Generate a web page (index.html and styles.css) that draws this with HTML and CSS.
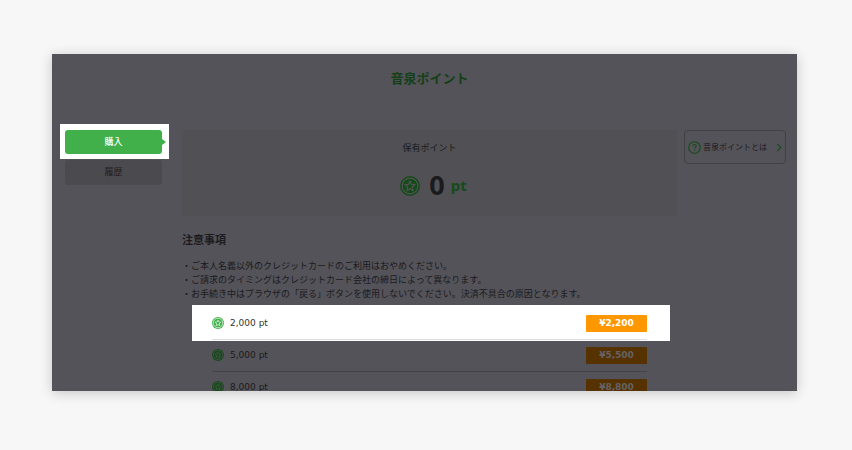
FILE: index.html
```
<!DOCTYPE html>
<html lang="ja">
<head>
<meta charset="utf-8">
<meta name="viewport" content="width=device-width, initial-scale=1">
<title>音泉ポイント</title>
<link rel="stylesheet" href="styles.css">
</head>
<body>
<svg class="defs" aria-hidden="true">
  <symbol id="coin" viewBox="0 0 20 20">
    <circle class="coin-face" cx="10" cy="10" r="10"/>
    <circle class="coin-line" cx="10" cy="10" r="7.9"/>
    <path class="coin-line" d="M10 5.2l1.4 3.1 3.4.4-2.5 2.3.7 3.4-3-1.7-3 1.7.7-3.4-2.5-2.3 3.4-.4z"/>
  </symbol>
</svg>
<div class="panel">
  <h1 class="title">音泉ポイント</h1>
  <div class="layout">
    <nav class="menu">
      <div class="spot"><a class="tab tab-active" href="#buy">購入</a></div>
      <a class="tab" href="#history">履歴</a>
    </nav>
    <main class="content">
      <section class="balance">
        <p class="balance-label">保有ポイント</p>
        <p class="balance-value">
          <svg class="coin coin-large dim" aria-hidden="true"><use href="#coin"/></svg>
          <span class="amount">0</span><span class="unit">pt</span>
        </p>
      </section>
      <h2 class="subtitle">注意事項</h2>
      <ul class="notes">
        <li>・ご本人名義以外のクレジットカードのご利用はおやめください。</li>
        <li>・ご請求のタイミングはクレジットカード会社の締日によって異なります。</li>
        <li>・お手続き中はブラウザの「戻る」ボタンを使用しないでください。決済不具合の原因となります。</li>
      </ul>
      <ul class="plans">
        <li class="plan plan-active">
          <div class="row"><svg class="coin" aria-hidden="true"><use href="#coin"/></svg><span>2,000 pt</span><button class="price" type="button">¥2,200</button></div>
        </li>
        <li class="plan">
          <div class="row"><svg class="coin dim" aria-hidden="true"><use href="#coin"/></svg><span>5,000 pt</span><button class="price" type="button">¥5,500</button></div>
        </li>
        <li class="plan">
          <div class="row"><svg class="coin dim" aria-hidden="true"><use href="#coin"/></svg><span>8,000 pt</span><button class="price" type="button">¥8,800</button></div>
        </li>
      </ul>
    </main>
    <aside>
      <a class="help" href="#about">
        <svg class="help-icon" viewBox="0 0 14 14" aria-hidden="true"><circle cx="7" cy="7" r="6.2"/><path d="M5.1 5.7c0-2.5 3.8-2.4 3.8-.2 0 1.3-1.9 1.4-1.9 2.8M7 9.4v1.3"/></svg>
        <span>音泉ポイントとは</span>
        <svg class="chevron" viewBox="0 0 6 10" aria-hidden="true"><path d="M1 1l4 4-4 4"/></svg>
      </a>
    </aside>
  </div>
</div>
</body>
</html>
```
FILE: styles.css
```
* {
  box-sizing: border-box;
}

body {
  margin: 0;
  height: 100vh;
  padding: 54px 55px 59px 52px;
  display: flex;
  background: #f7f7f7;
  color: #1b1a1d;
  font: 9px/14px "Noto Sans", "Noto Sans CJK JP", sans-serif;
}

h1, h2, p, ul {
  margin: 0;
  padding: 0;
}

ul {
  list-style: none;
}

a {
  color: inherit;
  text-decoration: none;
}

.defs {
  position: absolute;
  width: 0;
  height: 0;
}

.panel {
  flex: 1;
  overflow: hidden;
  background: #545359;
  box-shadow: 0 2px 12px rgba(0, 0, 0, 0.2);
}

.title {
  padding: 14px 0 36px 10px;
  font-size: 13px;
  line-height: 20px;
  text-align: center;
  color: #164018;
}

.layout {
  display: grid;
  grid-template-columns: 109px minmax(0, 1fr) 102px;
  padding: 0 11px 0 8px;
}

.spot {
  height: 35px;
  padding: 6px 7px 5px 5px;
  background: #fff;
}

.tab {
  display: block;
  height: 25px;
  margin: 1px 7px 0 5px;
  border-radius: 3px;
  background: #4b4a4e;
  line-height: 24px;
  text-align: center;
}

.tab-active {
  position: relative;
  height: 24px;
  margin: 0;
  background: #42b04a;
  color: #fff;
  font-weight: 500;
}

.tab-active::after {
  content: "";
  position: absolute;
  left: 100%;
  top: 9px;
  border: 3px solid transparent;
  border-left: 4px solid #42b04a;
  border-right: 0;
}

.content {
  padding: 6px 7px 0 13px;
}

.balance {
  height: 86px;
  padding-top: 11px;
  background: #515054;
  text-align: center;
}

.balance-value {
  display: flex;
  justify-content: center;
  align-items: center;
  padding-left: 8px;
  margin-top: 12px;
  height: 36px;
  font-weight: 700;
}

.amount {
  margin: 0 6px 0 9px;
  font-size: 27px;
  line-height: 36px;
}

.unit {
  font-size: 15px;
  color: #164a1a;
}

.coin {
  width: 12px;
  height: 12px;
  margin-right: 6px;
  fill: #42b04a;
  stroke: #fff;
}

.coin-large {
  width: 20px;
  height: 20px;
  margin: 2px 0 0;
}

.dim {
  fill: #164a1a;
  stroke: #545359;
}

.coin-face {
  stroke: none;
}

.coin-line {
  fill: none;
  stroke-width: 1.1;
}

.subtitle {
  margin-top: 16px;
  font-size: 11px;
  line-height: 16px;
}

.notes {
  margin-top: 11px;
  line-height: 13px;
  white-space: nowrap;
}

.notes li + li {
  margin-top: 1px;
}

.plans {
  margin: 5px 7px 0 10px;
  font-family: "DejaVu Sans", sans-serif;
}

.plan {
  height: 32px;
  padding: 0 23px 0 20px;
}

.plan-active {
  height: 36px;
  margin-bottom: -1px;
  padding-top: 3px;
  background: #fff;
  color: #333;
}

.row {
  display: flex;
  align-items: center;
  height: 32px;
  padding-bottom: 1px;
  border-bottom: 1px solid #434247;
}

.plan-active .row {
  border-bottom-color: #ddd;
}

.price {
  width: 61px;
  height: 17px;
  margin-left: auto;
  padding: 0;
  border: 0;
  border-radius: 1px;
  background: #553200;
  color: #646267;
  font: 700 9px/16px "DejaVu Sans", sans-serif;
}

.plan-active .price {
  background: #ff9700;
  color: #fff;
}

.help {
  display: flex;
  align-items: center;
  height: 34px;
  margin-top: 6px;
  padding: 0 3px;
  border: 1px solid #414045;
  border-radius: 4px;
  font-size: 8px;
  white-space: nowrap;
}

.help svg {
  fill: none;
  stroke: #164a1a;
  stroke-width: 1.2;
}

.help-icon {
  width: 13px;
  height: 13px;
  margin-right: 2px;
}

.chevron {
  width: 6px;
  height: 9px;
  margin-left: auto;
}
```
